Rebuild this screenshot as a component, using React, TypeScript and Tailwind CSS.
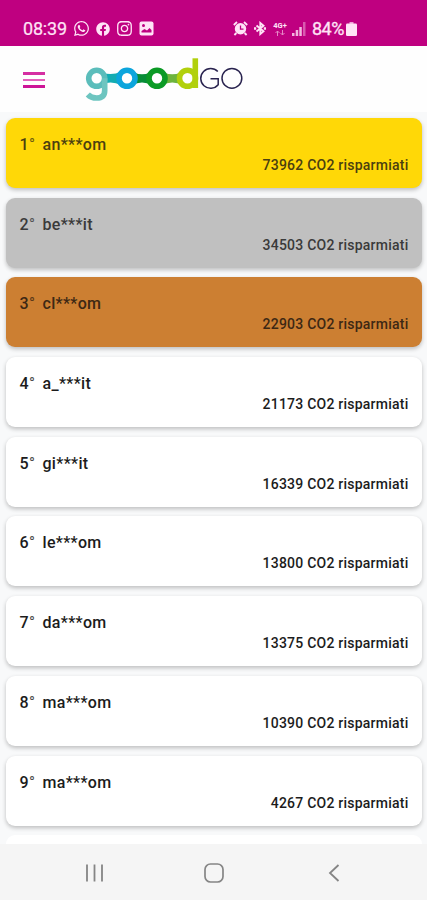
import React from "react";
import { FaFacebook, FaInstagram, FaWhatsapp } from "react-icons/fa";

const rows = [
  { name: "an***om", co2: 73962, tone: "bg-[#ffd807] text-[#4b4010]" },
  { name: "be***it", co2: 34503, tone: "bg-[#c0c0c0] text-[#3a3a3a]" },
  { name: "cl***om", co2: 22903, tone: "bg-[#cc7f32] text-[#3d2814]" },
  { name: "a_***it", co2: 21173, tone: "bg-white text-[#1c1c1c]" },
  { name: "gi***it", co2: 16339, tone: "bg-white text-[#1c1c1c]" },
  { name: "le***om", co2: 13800, tone: "bg-white text-[#1c1c1c]" },
  { name: "da***om", co2: 13375, tone: "bg-white text-[#1c1c1c]" },
  { name: "ma***om", co2: 10390, tone: "bg-white text-[#1c1c1c]" },
  { name: "ma***om", co2: 4267, tone: "bg-white text-[#1c1c1c]" },
];

function StatusBar() {
  return (
    <div className="flex h-[46px] shrink-0 items-center bg-[#bf0080] pt-[11px] pl-[23px] text-[#ffe3f6]">
      <span className="w-[50px] text-[18px] leading-5 tracking-[-0.2px] [-webkit-text-stroke:0.200px]">08:39</span>
      <FaWhatsapp className="size-[17px]" />
      <FaFacebook className="ml-[6px] size-[14px]" />
      <FaInstagram className="ml-[6px] size-[17px]" />
      <svg className="ml-[6px] size-[15px]" viewBox="0 0 15 15">
        <rect x="0.5" y="0.5" width="14" height="14" rx="2" fill="currentColor" />
        <circle cx="4.5" cy="4.5" r="1.500" fill="#bf0080" />
        <path d="M2.500 11.500V10l3-2 2.500 1.500 2.500-2.500 2 2v2.500z" fill="#bf0080" />
      </svg>
      <svg className="ml-[79px] size-[15px]" viewBox="0 0 15 15" fill="none" stroke="currentColor">
        <circle cx="7.5" cy="7.8" r="5.7" fill="currentColor" stroke="none" />
        <path d="M.8 4 4 1M14.2 4 11 1M3.4 12l-2 2M11.6 12l2 2" strokeWidth="1.8" />
        <path d="M7.5 4.5v3.7h3" stroke="#bf0080" strokeWidth="1.3" />
      </svg>
      <svg className="ml-[6px] h-[15px] w-[12px]" viewBox="0 0 12 15" fill="none" stroke="currentColor" strokeWidth="1.9">
        <path d="M2.500 4.500 9.500 10.200 6.300 13V2l3.200 2.800-7 5.700" />
        <path d="M0 7.500h2.200M9.800 7.500H12" strokeWidth="2.400" />
      </svg>
      <div className="ml-[6px] flex w-[16px] flex-col items-center">
        <span className="text-[7.500px] leading-[8px] font-bold">4G+</span>
        <svg className="h-[6px] w-[10px] opacity-60" viewBox="0 0 10 6" fill="none" stroke="currentColor">
          <path d="M2.500 6V1M.5 3l2-2 2 2M7.500 0v5M5.500 3l2 2 2-2" />
        </svg>
      </div>
      <svg className="ml-[4px] h-[14px] w-[14px]" viewBox="0 0 14 14" fill="currentColor">
        <path d="M0 11h2.500v3H0zM3.700 8h2.500v6H3.700zM7.300 5h2.500v9H7.300z" opacity=".8" />
        <path d="M11 0h2.500v14H11z" opacity=".4" />
      </svg>
      <span className="ml-[6px] w-[33px] text-[18px] leading-5 tracking-[-0.500px] [-webkit-text-stroke:0.300px]">84%</span>
      <svg className="ml-[1px] h-[14px] w-[11px]" viewBox="0 0 11 14" fill="currentColor">
        <path d="M3.500 0h4v2h-4z" opacity=".7" />
        <rect y="1.500" width="11" height="12.500" rx="1.300" />
      </svg>
    </div>
  );
}

function Logo() {
  return (
    <svg className="mt-[1px] ml-[40px] h-[50px] w-[160px]" viewBox="85 55 160 50" fill="none" role="img" aria-label="goodGO">
      <path d="M102 72.500Q112 76 121 71.500V85Q112 80.500 102 84Z" fill="#13acb2" />
      <path d="M132 71.500Q142 77 152 71.500V85Q142 80 132 85Z" fill="#078d37" />
      <path d="M162 71.500Q172 77 183 71.500V85Q172 80 162 85Z" fill="#6db43d" />
      <g strokeWidth="5.600">
        <circle cx="96.700" cy="78.300" r="8" fill="#fefefe" stroke="#5bbdbb" />
        <path d="M104.700 78.300V90.500Q104.700 98 96.700 98Q91 98 87.800 94.500" stroke="#6dc5c0" />
        <circle cx="127" cy="78.300" r="8" fill="#fefefe" stroke="#0ca5dc" />
        <circle cx="157" cy="78.300" r="8" fill="#fefefe" stroke="#0b9a25" />
        <circle cx="187.500" cy="78.300" r="8" fill="#fefefe" stroke="#b1d00c" />
        <path d="M195.300 58.300V88" stroke="#b1d00c" />
      </g>
      <g stroke="#29234f" strokeWidth="1.500">
        <path d="M217.800 71.500A9.900 9.900 0 1 0 218.200 84.800V78.700H210.500" />
        <circle cx="231.900" cy="78.300" r="9.900" />
      </g>
    </svg>
  );
}

export default function App() {
  return (
    <div className="flex h-[900px] w-full flex-col overflow-hidden bg-[#f8f9fa] [font-family:Roboto,sans-serif]">
      <StatusBar />
      <header className="flex h-[66px] shrink-0 items-center bg-[#fefefe] pl-[23px]">
        <button aria-label="Menu" className="mt-[2px] flex w-[22px] flex-col gap-1">
          <span className="h-[2.500px] bg-[#d52fa2]" />
          <span className="h-[2.500px] bg-[#e45fba]" />
          <span className="h-[2.500px] bg-[#cd1597]" />
        </button>
        <Logo />
      </header>
      <main className="flex min-h-0 flex-1 flex-col gap-[9.700px] overflow-hidden px-[5.500px] pt-[6px]">
        {rows.map((row, index) => (
          <article
            key={index}
            className={`h-[70px] shrink-0 rounded-[9px] px-[14px] pt-[17px] font-medium shadow-[0_2px_4px_rgba(0,0,0,0.24)] ${row.tone}`}
          >
            <div className="flex text-[16px] leading-5 tracking-[0.300px]">
              <span className="w-[23px]">
                {index + 1}
                <span className="font-normal opacity-80">°</span>
              </span>
              <span>{row.name}</span>
            </div>
            <p className="mt-[1px] -mr-[1px] text-right text-[14px] leading-[18px] tracking-[0.230px]">{row.co2} CO2 risparmiati</p>
          </article>
        ))}
        <article className="h-[70px] shrink-0 rounded-[9px] bg-white" />
      </main>
      <nav className="flex h-[56px] shrink-0 items-center bg-[#f5f5f5] pl-[84px] text-[#858585]">
        <svg className="mt-[2px] h-[20px] w-[20px]" viewBox="0 0 20 20" fill="none" stroke="currentColor" strokeWidth="1.800">
          <path d="M3 1.500v17M10.500 1.500v17M18 1.500v17" />
        </svg>
        <svg className="mt-[2px] ml-[100px] h-[20px] w-[20px]" viewBox="0 0 20 20" fill="none" stroke="currentColor" strokeWidth="1.700">
          <rect x="1" y="1" width="18" height="18" rx="5.500" />
        </svg>
        <svg className="mt-[2px] ml-[104px] h-[20px] w-[12px]" viewBox="0 0 12 20" fill="none" stroke="currentColor" strokeWidth="1.800">
          <path d="m10.500 2-8.500 8 8.500 8" />
        </svg>
      </nav>
    </div>
  );
}
